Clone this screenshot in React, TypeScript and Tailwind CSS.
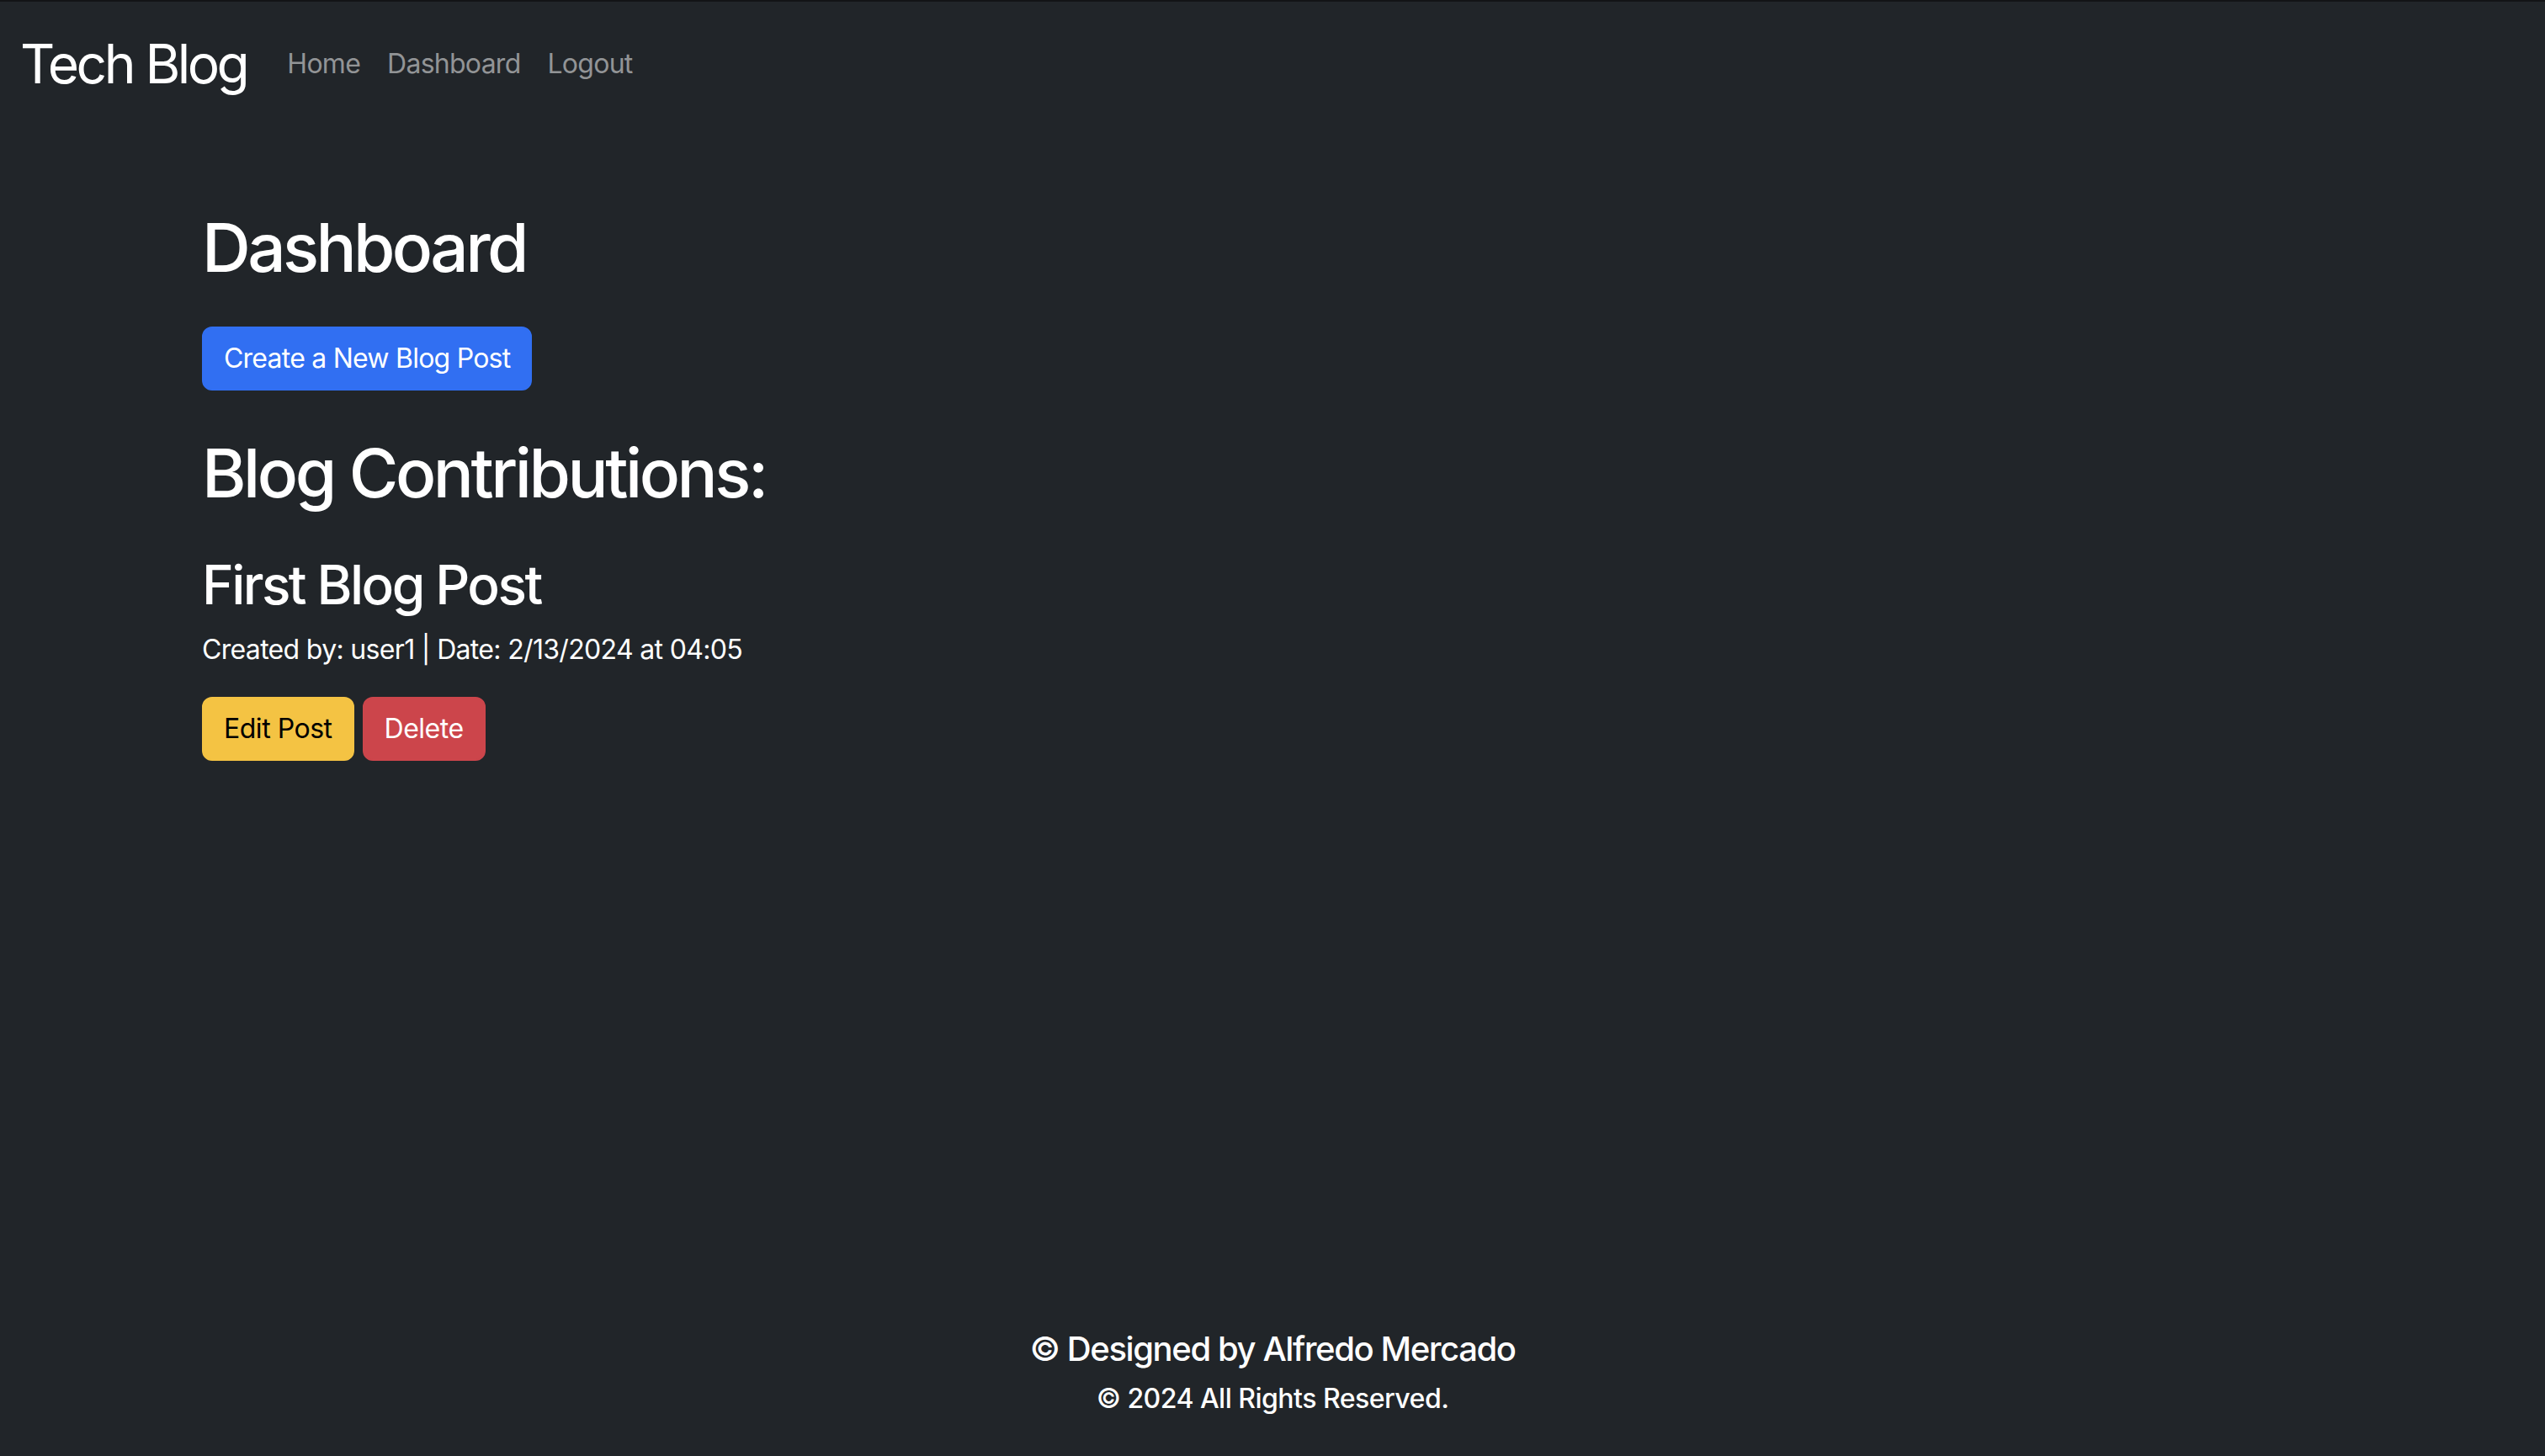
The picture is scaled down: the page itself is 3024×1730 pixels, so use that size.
import React from 'react';

const App: React.FC = () => {
  const links = ["Home", "Dashboard", "Logout"];

  return (
    <div className="min-h-screen flex flex-col bg-[#212529] border-t-2 border-[#131416] text-white font-['Inter',sans-serif]">
      <nav className="flex items-center px-6 py-4">
        <a href="#" className="text-[64px] leading-[1.5] py-[10px] mr-8 text-white tracking-[-0.055em]">
          Tech Blog
        </a>
        <ul className="flex items-center">
          {links.map((link) => (
            <li key={link}>
              <a href="#" className="block px-4 py-2 text-[32px] leading-[1.5] text-[#929496] tracking-[-0.023em]">
                {link}
              </a>
            </li>
          ))}
        </ul>
      </nav>

      <main className="flex-1 w-full max-w-[2640px] mx-auto px-12 pt-24">
        <h1 className="text-[80px] leading-[1.2] font-medium mb-[46px] tracking-[-0.045em]">Dashboard</h1>
        <button className="px-6 py-3 border-2 border-[#316ff2] bg-[#316ff2] rounded-xl text-[32px] leading-[1.5] text-white tracking-[-0.024em]">
          Create a New Blog Post
        </button>

        <h1 className="text-[80px] leading-[1.2] font-medium mt-[50px] mb-[47px] tracking-[-0.043em]">Blog Contributions:</h1>

        <div>
          <h2 className="text-[64px] leading-[1.2] font-medium mb-[14px] tracking-[-0.04em]">First Blog Post</h2>
          <p className="text-[32px] leading-[1.5] mb-8 tracking-[-0.021em]">Created by: user1 | Date: 2/13/2024 at 04:05</p>
          <div className="flex gap-[10px]">
            <button className="px-6 py-3 border-2 border-[#f4c343] bg-[#f4c343] rounded-xl text-[32px] leading-[1.5] text-black tracking-[-0.015em]">
              Edit Post
            </button>
            <button className="px-6 py-3 border-2 border-[#cc454b] bg-[#cc454b] rounded-xl text-[32px] leading-[1.5] text-white tracking-[-0.015em]">
              Delete
            </button>
          </div>
        </div>
      </main>

      <footer className="text-center pb-[44px]">
        <p className="text-[40px] leading-[1.2] font-medium tracking-[-0.035em]">© Designed by Alfredo Mercado</p>
        <p className="text-[32px] leading-[1.5] font-medium mt-[11px] tracking-[-0.016em]">© 2024 All Rights Reserved.</p>
      </footer>
    </div>
  );
};

export default App;
